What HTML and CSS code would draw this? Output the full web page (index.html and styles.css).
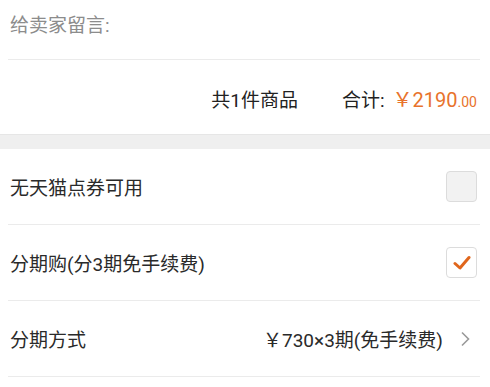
FILE: index.html
```html
<!DOCTYPE html>
<html lang="zh-CN">
<head>
    <meta charset="UTF-8">
    <meta name="viewport" content="width=device-width, initial-scale=1.0">
    <title>确认订单</title>
    <link rel="stylesheet" href="styles.css">
</head>
<body>
    <div class="order">
        <div class="message">给卖家留言:</div>
        <div class="divider"></div>
        <div class="total">
            <span class="count">共1件商品</span>
            <span class="sum-label">合计:</span>
            <span class="price">￥2190<small>.00</small></span>
        </div>
    </div>

    <div class="gap"></div>

    <div class="options">
        <div class="option">
            <span class="option-label">无天猫点券可用</span>
            <span class="checkbox"></span>
        </div>
        <div class="option">
            <span class="option-label">分期购(分3期免手续费)</span>
            <span class="checkbox checked">
                <svg width="18" height="16" viewBox="0 0 18 16">
                    <path d="M2 8.5 L7 13 L16 2.5" fill="none" stroke="#e0661c" stroke-width="3" stroke-linecap="round" stroke-linejoin="round"/>
                </svg>
            </span>
        </div>
        <div class="option">
            <span class="option-label">分期方式</span>
            <span class="option-value">￥730×3期(免手续费)</span>
            <svg class="chevron" width="10" height="16" viewBox="0 0 10 16">
                <path d="M2 1.5 L8.5 8 L2 14.5" fill="none" stroke="#9a9a9a" stroke-width="1.6"/>
            </svg>
        </div>
    </div>
</body>
</html>
```

FILE: styles.css
```css
body {
    margin: 0;
    background: #ffffff;
    font-family: Roboto, "Noto Sans CJK SC", sans-serif;
    color: #2a2a2a;
}

.message {
    height: 59px;
    padding-left: 10px;
    padding-top: 10px;
    box-sizing: border-box;
    font-size: 19px;
    color: #8c8c8c;
}

.divider {
    height: 1px;
    margin: 0 10px 0 8px;
    background: #ebebeb;
}

.total {
    height: 74px;
    display: flex;
    align-items: center;
    justify-content: flex-end;
    padding-right: 13px;
    padding-top: 2px;
    box-sizing: border-box;
    font-size: 19px;
    color: #222222;
}

.count {
    margin-right: 44px;
}

.sum-label {
    margin-right: 8px;
}

.price {
    color: #e8732c;
    font-size: 20px;
}

.price small {
    font-size: 14px;
}

.gap {
    height: 14px;
    background: #efefef;
    border-top: 1px solid #e6e6e6;
}

.options {
    padding: 0 10px 0 8px;
}

.option {
    height: 75px;
    display: flex;
    align-items: center;
    border-bottom: 1px solid #ebebeb;
    padding-left: 2px;
    font-size: 19px;
    color: #2a2a2a;
}

.option-label {
    flex: 1;
}

.checkbox {
    width: 29px;
    height: 29px;
    margin-right: 3px;
    border: 1px solid #dcdcdc;
    border-radius: 4px;
    background: #f2f2f2;
    display: flex;
    align-items: center;
    justify-content: center;
}

.checkbox.checked {
    background: #ffffff;
}

.option-value {
    margin-right: 17px;
}

.chevron {
    margin-right: 10px;
}
```
